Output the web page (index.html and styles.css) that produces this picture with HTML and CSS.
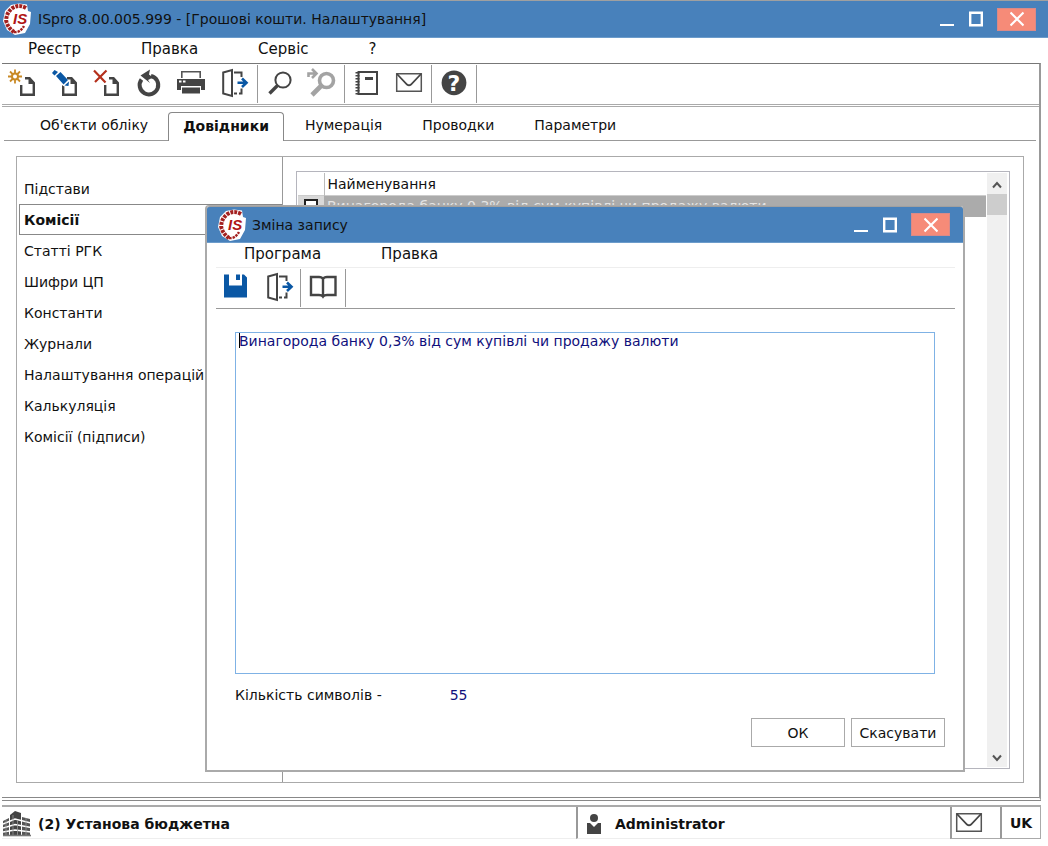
FILE: index.html
```html
<!DOCTYPE html>
<html lang="uk">
<head>
    <meta charset="UTF-8">
    <meta name="viewport" content="width=device-width, initial-scale=1.0">
    <title>ISpro - Грошові кошти. Налаштування</title>
    <link rel="stylesheet" href="styles.css">
</head>
<body>
    <svg class="defs" width="0" height="0" aria-hidden="true">
        <symbol id="ring" viewBox="0 0 28 32">
            <path d="M16 0.5 L24 1.5 L25 8 L28 9 L27 21 L22 30 L12 32 L4 27 L0 18 L2 8 L8 2 Z" fill="#fff"/>
            <path d="M23 5 Q16 1 9.5 5 Q3 10 3.2 18 Q5 25 11 29" fill="none" stroke="#a3201f" stroke-width="4" stroke-dasharray="3 1"/>
            <path d="M11 29 Q17 30 21 23" fill="none" stroke="#a3201f" stroke-width="2.4" stroke-dasharray="2.5 1"/>
        </symbol>
        <symbol id="page" viewBox="0 0 32 32">
            <path d="M18 10.2 H22.5 L26.8 15 V26.8 H14.2 V17" fill="none" stroke="#444" stroke-width="2.4"/>
            <path d="M21.5 9 L28 16 H21.5 Z" fill="#444"/>
        </symbol>
        <symbol id="exit" viewBox="0 0 32 32">
            <path d="M6.2 4.5 L15 2 V28 L6.2 25.5 Z M17 4.5 H24.5 V9 M17 25.5 H20 M22 25.5 H24.5 V20.5" fill="none" stroke="#444" stroke-width="2"/>
            <path d="M20.5 14.8 H29 M25 10.5 L29.5 14.8 L25 19" fill="none" stroke="#0a57a4" stroke-width="2.6"/>
        </symbol>
        <symbol id="mail" viewBox="0 0 32 32">
            <path d="M3.7 5.7 H28.3 V23.3 H3.7 Z" fill="none" stroke="#555" stroke-width="1.5"/>
            <path d="M4 6 L14 16.5 Q16 18 18 16.5 L28 6" fill="none" stroke="#444" stroke-width="1.8"/>
        </symbol>
    </svg>

    <div class="app">
        <header class="titlebar">
            <svg class="logo" viewBox="0 0 28 32" aria-hidden="true">
                <use href="#ring"/>
                <text x="10" y="21" class="logo-text">IS</text>
            </svg>
            <h1 class="title">ISpro 8.00.005.999 - [Грошові кошти. Налаштування]</h1>
            <div class="win-controls">
                <button class="win-btn" aria-label="Згорнути"><svg viewBox="0 0 14 16"><path d="M0 14 H14" stroke-width="2"/></svg></button>
                <button class="win-btn" aria-label="Розгорнути"><svg viewBox="0 0 14 16"><path d="M1.2 1.7 H12.8 V14.3 H1.2 Z" stroke-width="2.4"/></svg></button>
                <button class="win-btn close" aria-label="Закрити"><svg viewBox="0 0 14 16"><path d="M0.5 1.5 L13.5 14.5 M13.5 1.5 L0.5 14.5" stroke-width="2.2"/></svg></button>
            </div>
        </header>

        <nav class="menubar">
            <button class="menu-item">Реєстр</button>
            <button class="menu-item">Правка</button>
            <button class="menu-item">Сервіс</button>
            <button class="menu-item">?</button>
        </nav>

        <div class="frame">
            <div class="toolbar">
                <div class="tool-group">
                    <button class="tool" aria-label="Створити">
                        <svg viewBox="0 0 32 32">
                            <path d="M8 1.5 V15.5 M1 8.5 H15 M3 3.5 L13 13.5 M13 3.5 L3 13.5" stroke="#c98a26" stroke-width="1.8"/>
                            <circle cx="8" cy="8.5" r="3" fill="#fff" stroke="#c98a26" stroke-width="2"/>
                            <use href="#page"/>
                        </svg>
                    </button>
                    <button class="tool" aria-label="Змінити">
                        <svg viewBox="0 0 32 32">
                            <use href="#page"/>
                            <path d="M6 8 L11 3 L21 14 L19 19 L14 18 Z" fill="#fff"/>
                            <path d="M7 8 L11.5 4 L19 12 L14.5 16.5 Z M3 5 L5.5 2 L9 4 L5.5 7.5 Z M15.5 17.5 L20 13.5 L19.5 18 Z" fill="#0a57a4"/>
                        </svg>
                    </button>
                    <button class="tool" aria-label="Видалити">
                        <svg viewBox="0 0 32 32">
                            <path d="M3 2.5 L14.5 14.5 M15.5 2.5 L4 14" stroke="#b5301c" stroke-width="2.2"/>
                            <use href="#page"/>
                        </svg>
                    </button>
                    <button class="tool" aria-label="Оновити">
                        <svg viewBox="0 0 32 32">
                            <path d="M8.5 11.5 A9.3 9.3 0 1 0 18 8" fill="none" stroke="#444" stroke-width="4"/>
                            <path d="M7.5 7.5 L17 1.5 L16 6.5 L20 9.5 L15 12 L17 15 Z" fill="#444"/>
                        </svg>
                    </button>
                    <button class="tool" aria-label="Друк">
                        <svg viewBox="0 0 32 32">
                            <path d="M6.8 10 V3.8 H25.2 V10" fill="none" stroke="#555" stroke-width="1.6"/>
                            <path d="M2 11 H30 V22 H26 V18 H6 V22 H2 Z" fill="#444"/>
                            <path d="M7 19.5 H25 V25.5 H7 Z" fill="#444"/>
                            <path d="M4 13.5 H6.5 M8 13.5 H10.5" stroke="#fff" stroke-width="2"/>
                        </svg>
                    </button>
                    <button class="tool" aria-label="Вихід"><svg viewBox="0 0 32 32"><use href="#exit"/></svg></button>
                </div>
                <div class="tool-group">
                    <button class="tool" aria-label="Пошук">
                        <svg viewBox="0 0 32 32">
                            <circle cx="19" cy="12" r="7.6" fill="none" stroke="#444" stroke-width="2"/>
                            <path d="M13.5 17.5 L5.5 25.5" stroke="#444" stroke-width="3.4"/>
                        </svg>
                    </button>
                    <button class="tool" aria-label="Шукати далі" disabled>
                        <svg viewBox="0 0 32 32">
                            <circle cx="20.5" cy="12.5" r="7" fill="none" stroke="#a3a3a3" stroke-width="3.6"/>
                            <path d="M15 18 L6 27" stroke="#a3a3a3" stroke-width="4.6"/>
                            <path d="M2.5 9 V5.5 H10 M6 1 L10.5 5.5 L6 10" fill="none" stroke="#a3a3a3" stroke-width="2.6"/>
                        </svg>
                    </button>
                </div>
                <div class="tool-group">
                    <button class="tool" aria-label="Журнал">
                        <svg viewBox="0 0 32 32">
                            <path d="M7.5 4 H26 V26 H7.5 Z" fill="none" stroke="#444" stroke-width="2"/>
                            <path d="M6.5 4 V27" stroke="#444" stroke-width="4" stroke-dasharray="1.5 1.5"/>
                            <path d="M14 10.5 H22" stroke="#444" stroke-width="3"/>
                        </svg>
                    </button>
                    <button class="tool" aria-label="Пошта"><svg viewBox="0 0 32 32"><use href="#mail"/></svg></button>
                </div>
                <div class="tool-group">
                    <button class="tool" aria-label="Довідка">
                        <svg viewBox="0 0 32 32">
                            <circle cx="16" cy="14.8" r="12.4" fill="#444"/>
                            <text x="16" y="23" class="help-mark">?</text>
                        </svg>
                    </button>
                </div>
            </div>

            <div class="tabs" role="tablist">
                <button class="tab" role="tab">Об'єкти обліку</button>
                <button class="tab active" role="tab" aria-selected="true">Довідники</button>
                <button class="tab" role="tab">Нумерація</button>
                <button class="tab" role="tab">Проводки</button>
                <button class="tab" role="tab">Параметри</button>
            </div>

            <main class="panel">
                <ul class="sidebar">
                    <li><button class="side-item">Підстави</button></li>
                    <li><button class="side-item active">Комісії</button></li>
                    <li><button class="side-item">Статті РГК</button></li>
                    <li><button class="side-item">Шифри ЦП</button></li>
                    <li><button class="side-item">Константи</button></li>
                    <li><button class="side-item">Журнали</button></li>
                    <li><button class="side-item">Налаштування операцій</button></li>
                    <li><button class="side-item">Калькуляція</button></li>
                    <li><button class="side-item">Комісії (підписи)</button></li>
                </ul>
                <div class="content">
                    <div class="grid">
                        <table class="records">
                            <thead>
                                <tr><th class="check-col"></th><th>Найменування</th></tr>
                            </thead>
                            <tbody>
                                <tr>
                                    <td class="check-col"><input type="checkbox" class="check" aria-label="Позначити запис"></td>
                                    <td>Винагорода банку 0,3% від сум купівлі чи продажу валюти</td>
                                </tr>
                            </tbody>
                        </table>
                        <div class="scrollbar">
                            <button class="scroll-btn" aria-label="Вгору"><svg viewBox="0 0 10 8"><path d="M1 6.5 L5 2 L9 6.5"/></svg></button>
                            <div class="thumb"></div>
                            <button class="scroll-btn" aria-label="Вниз"><svg viewBox="0 0 10 8"><path d="M1 1.5 L5 6 L9 1.5"/></svg></button>
                        </div>
                    </div>
                </div>
            </main>
        </div>

        <footer class="statusbar">
            <div class="status company">
                <svg class="status-icon" viewBox="0 0 28 28" aria-hidden="true">
                    <path d="M12 1 L18 3 V26 H7 V5 Z" fill="#444"/>
                    <path d="M0 11 L6 8 V26 H0 Z M19 7 L27 9 V26 H19 Z" fill="#555"/>
                    <path d="M0 14 L12 9 L28 13 M0 18 L12 14.5 L28 17.5 M0 22 L12 20 L28 22" fill="none" stroke="#fff" stroke-width="1.6"/>
                    <path d="M10 5 V26 M14.5 10 V26 M3 10 V26 M23 8 V26" stroke="#999" stroke-width="0.8"/>
                    <path d="M0 25.5 H28" stroke="#777" stroke-width="1.6"/>
                </svg>
                <span>(2) Установа бюджетна</span>
            </div>
            <div class="status user">
                <svg class="user-icon" viewBox="0 0 16 20" aria-hidden="true">
                    <circle cx="8" cy="4" r="4" fill="#444"/>
                    <path d="M1 9 H4 L8 13 L12 9 H15 V20 H1 Z" fill="#444"/>
                </svg>
                <span>Administrator</span>
            </div>
            <button class="status mail" aria-label="Пошта"><svg viewBox="0 0 32 32"><use href="#mail"/></svg></button>
            <button class="status lang">UK</button>
        </footer>

        <section class="dialog" role="dialog" aria-labelledby="dialog-title">
            <header class="titlebar">
                <svg class="logo" viewBox="0 0 28 32" aria-hidden="true">
                    <use href="#ring"/>
                    <text x="10" y="21" class="logo-text">IS</text>
                </svg>
                <h2 class="title" id="dialog-title">Зміна запису</h2>
                <div class="win-controls">
                    <button class="win-btn" aria-label="Згорнути"><svg viewBox="0 0 14 16"><path d="M0 14 H14" stroke-width="2"/></svg></button>
                    <button class="win-btn" aria-label="Розгорнути"><svg viewBox="0 0 14 16"><path d="M1.2 1.7 H12.8 V14.3 H1.2 Z" stroke-width="2.4"/></svg></button>
                    <button class="win-btn close" aria-label="Закрити"><svg viewBox="0 0 14 16"><path d="M0.5 1.5 L13.5 14.5 M13.5 1.5 L0.5 14.5" stroke-width="2.2"/></svg></button>
                </div>
            </header>
            <nav class="menubar">
                <button class="menu-item">Програма</button>
                <button class="menu-item">Правка</button>
            </nav>
            <div class="toolbar">
                <div class="tool-group">
                    <button class="tool" aria-label="Зберегти">
                        <svg viewBox="0 0 32 32">
                            <path d="M3 2.5 H8 V13.5 H21 V2.5 H23 L26 5.5 V25.5 H3 Z M15 2.5 H19 V8 H15 Z" fill="#0a57a4"/>
                        </svg>
                    </button>
                    <button class="tool" aria-label="Вихід"><svg viewBox="0 0 32 32"><use href="#exit"/></svg></button>
                </div>
                <div class="tool-group">
                    <button class="tool" aria-label="Довідник">
                        <svg viewBox="0 0 32 32">
                            <path d="M16 7 Q15 5 12 5 H4 V23 H12 Q15 23 16 24.5 Q17 23 20 23 H28.5 V5 H20 Q17 5 16 7 V24" fill="none" stroke="#444" stroke-width="2.4"/>
                        </svg>
                    </button>
                </div>
            </div>
            <form class="edit-form">
                <div class="memo-wrap">
                    <textarea class="memo" id="memo" aria-label="Найменування" spellcheck="false">Винагорода банку 0,3% від сум купівлі чи продажу валюти</textarea>
                    <span class="caret"></span>
                </div>
                <div class="counter">
                    <label for="count">Кількість символів -</label>
                    <output id="count" for="memo">55</output>
                </div>
                <div class="actions">
                    <button type="button" class="btn">ОК</button>
                    <button type="button" class="btn">Скасувати</button>
                </div>
            </form>
        </section>
    </div>
</body>
</html>
```

FILE: styles.css
```css
* {
    box-sizing: border-box;
}
body {
    margin: 0;
    background-color: #fff;
    color: #111;
    font-family: "DejaVu Sans", Verdana, sans-serif;
    font-size: 14px;
}
button {
    font: inherit;
    color: inherit;
    background: none;
    border: none;
    padding: 0;
}
.defs {
    position: absolute;
}
.app {
    position: relative;
    display: flex;
    flex-direction: column;
    min-height: 100vh;
    padding-bottom: 7px;
}

/* title bar */
.titlebar {
    display: flex;
    align-items: center;
    height: 38px;
    padding: 0 12px 0 3px;
    background-color: #4881bb;
    border-top: 1px solid #a0a0a0;
    border-bottom: 1px solid #6c9ccb;
}
.logo {
    width: 28px;
    height: 32px;
    overflow: visible;
}
.logo-text {
    font: italic bold 15px "Liberation Sans", Arial, sans-serif;
    fill: #b01515;
}
.title {
    flex: 1;
    margin: 0 0 0 7px;
    font-size: 14px;
    font-weight: normal;
}
.win-controls {
    display: flex;
    align-items: center;
}
.win-btn {
    display: flex;
    align-items: center;
    justify-content: center;
    width: 29px;
    height: 22px;
}
.win-btn svg {
    width: 14px;
    height: 16px;
    fill: none;
    stroke: #fff;
}
.win-btn.close {
    width: 39px;
    height: 23px;
    margin-left: 7px;
    background-color: #f68b78;
    border: 1px solid #d98a88;
}

/* menu */
.menubar {
    display: flex;
    gap: 60px;
    height: 25px;
    padding: 0 28px;
    font-size: 15px;
}
.menu-item {
    height: 21px;
}

/* main frame */
.frame {
    flex: 1;
    display: flex;
    flex-direction: column;
    margin: 0 7px 0 2px;
    border-top: 1px solid #777;
    border-right: 2px solid #999;
    border-bottom: 4px double #888;
}
.toolbar {
    display: flex;
    height: 43px;
    border-bottom: 3px double #aaa;
}
.tool-group {
    display: flex;
    margin: 1px 0;
    padding: 0 1px;
    border-right: 1px solid #999;
}
.tool-group:first-child {
    padding: 0 3px 0 0;
}
.tool {
    width: 42px;
    display: flex;
    align-items: center;
    justify-content: center;
}
.tool svg {
    width: 32px;
    height: 32px;
}
.help-mark {
    font: bold 22px "DejaVu Sans", sans-serif;
    text-anchor: middle;
    fill: #fff;
}

/* tabs */
.tabs {
    display: flex;
    height: 34px;
    margin: 0 3px 0 2px;
    padding: 5px 0 0 16px;
    border-bottom: 1px solid #999;
}
.tab {
    height: 29px;
    padding: 0 20px 3px;
}
.tab.active {
    padding: 0 14px 2px;
    margin-right: 1px;
    background-color: #fff;
    border: 1px solid #888;
    border-bottom: none;
    border-radius: 4px 4px 0 0;
    font-weight: bold;
}

.panel {
    flex: 1;
    display: flex;
    margin: 15px 15px 14px 14px;
    border: 1px solid #aaa;
}
.sidebar {
    width: 266px;
    margin: 0;
    padding: 16px 0 0 2px;
    list-style: none;
    border-right: 1px solid #999;
}
.side-item {
    display: block;
    width: 100%;
    height: 31px;
    padding: 0 4px;
    text-align: left;
    border: 1px solid transparent;
}
.side-item.active {
    border-color: #888;
    border-right: none;
    font-weight: bold;
}
.content {
    flex: 1;
    display: flex;
    padding: 14px 13px 13px;
}
.grid {
    flex: 1;
    display: flex;
    align-items: flex-start;
    padding: 1px 2px 1px 1px;
    border: 1px solid #b5b5bd;
}
.records {
    flex: 1;
    border-collapse: collapse;
}
.records th,
.records td {
    height: 22px;
    padding: 0 3px;
    font-weight: normal;
    text-align: left;
}
.records td {
    background-color: #ababab;
    color: #e4e4e4;
    border-top: 1px solid #ccc;
}
.records th + th {
    border-left: 1px solid #bbb;
}
.records .check-col {
    width: 26px;
    padding: 0;
    text-align: center;
}
.records td.check-col {
    background-color: #d8d8d8;
}
.check {
    appearance: none;
    display: block;
    width: 14px;
    height: 14px;
    margin: 0 auto;
    background-color: #fff;
    border: 2px solid #222;
}
.scrollbar {
    align-self: stretch;
    display: flex;
    flex-direction: column;
    width: 20px;
    margin-left: 1px;
    background-color: #f0f0f0;
}
.scroll-btn {
    height: 21px;
}
.scroll-btn:last-child {
    margin-top: auto;
}
.scroll-btn svg {
    width: 10px;
    height: 8px;
    fill: none;
    stroke: #555;
    stroke-width: 2;
}
.thumb {
    height: 21px;
    background-color: #cdcdcd;
}

/* status bar */
.statusbar {
    display: flex;
    height: 34px;
    margin: 4px 7px 0 2px;
    border-top: 2px solid #aaa;
    font-weight: bold;
}
.status {
    display: flex;
    align-items: center;
    padding-top: 2px;
}
.company {
    flex: 1;
    gap: 7px;
    padding-left: 1px;
    border-bottom: 1px solid #eee;
}
.status-icon {
    width: 28px;
    height: 28px;
}
.user {
    width: 36%;
    gap: 13px;
    padding-left: 8px;
    border-left: 2px solid #999;
    border-bottom: 1px solid #eee;
}
.user-icon {
    width: 16px;
    height: 20px;
}
.status.mail {
    width: 50px;
    padding-left: 1px;
    border-left: 2px solid #999;
    border-bottom: 1px solid #aaa;
}
.status.mail svg {
    width: 32px;
    height: 32px;
}
.status.lang {
    width: 41px;
    padding: 0;
    justify-content: center;
    border: 1px solid #aaa;
    border-top: none;
    border-left: 2px solid #999;
}

/* record dialog */
.dialog {
    position: absolute;
    top: 205px;
    right: 83px;
    bottom: 74px;
    left: 205px;
    display: flex;
    flex-direction: column;
    background-color: #fff;
    border: 2px solid #aaa;
    border-top-width: 1px;
    border-radius: 4px 4px 0 0;
}
.dialog .titlebar {
    height: 37px;
    padding: 0 13px 0 11px;
    border-radius: 3px 3px 0 0;
}
.dialog .title {
    margin-left: 6px;
}
.dialog .menubar {
    margin: 0 8px 0 9px;
    height: 25px;
    border-bottom: 1px solid #eee;
}
.dialog .toolbar {
    margin: 0 8px 0 9px;
    height: 41px;
    border-bottom: 1px solid #999;
}
.dialog .tool-group:first-child {
    padding: 0 2px 0 0;
}
.dialog .tool-group:first-child .tool {
    width: 41px;
}
.edit-form {
    flex: 1;
    display: flex;
    flex-direction: column;
    padding: 23px 18px 23px 28px;
}
.memo-wrap {
    position: relative;
    flex: 1;
    display: flex;
    margin-right: 10px;
}
.memo {
    flex: 1;
    padding: 0 3px;
    border: 1px solid #7fb2e5;
    outline: none;
    resize: none;
    color: #10107c;
    font: inherit;
    line-height: 16px;
}
.caret {
    position: absolute;
    top: 1px;
    left: 4px;
    width: 1px;
    height: 15px;
    background-color: #000;
}
.counter {
    display: flex;
    gap: 68px;
    padding-top: 13px;
    line-height: 16px;
}
.counter output {
    color: #10107c;
}
.actions {
    display: flex;
    justify-content: flex-end;
    gap: 6px;
    margin-top: 15px;
}
.btn {
    width: 94px;
    height: 29px;
    border: 1px solid #aaa;
}
```
